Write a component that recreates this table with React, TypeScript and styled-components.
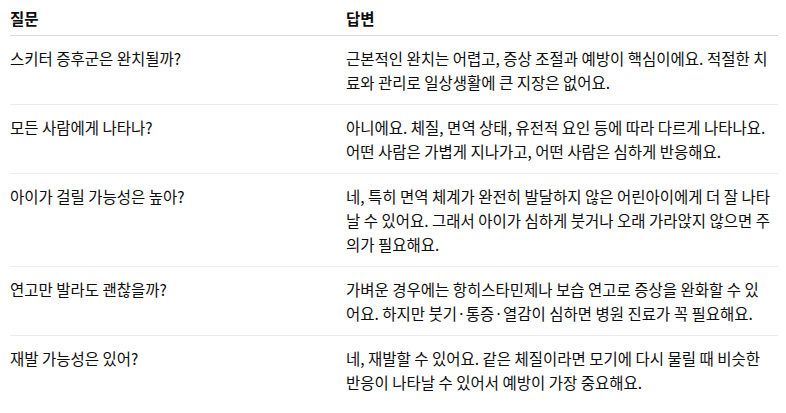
import React from "react";
import styled, { createGlobalStyle } from "styled-components";

const Global = createGlobalStyle`
  html, body { margin: 0; padding: 0; background: #ffffff; }
  body {
    font-family: "Noto Sans CJK KR", "Noto Sans", sans-serif;
    color: #0d0d0d;
  }
`;

const Wrap = styled.div`
  padding: 0 8px 0 10px;
`;

const Table = styled.table`
  width: 768px;
  border-collapse: collapse;
  table-layout: fixed;
  font-size: 15.5px;
  line-height: 24px;
`;

const Col = styled.col<{ $w: number }>`
  width: ${(p) => p.$w}px;
`;

const HeadCell = styled.th`
  text-align: left;
  font-weight: 700;
  padding: 6px 6.4px 5px 0;
  border-bottom: 1px solid #d9d9d9;
  vertical-align: top;
`;

const Row = styled.tr<{ $last?: boolean }>`
  border-bottom: ${(p) => (p.$last ? "none" : "1px solid #ececec")};
`;

const Cell = styled.td`
  padding: 10px 6.4px 10px 0;
  vertical-align: top;
  font-weight: 400;
`;

const rows: [string, string][] = [
  [
    "스키터 증후군은 완치될까?",
    "근본적인 완치는 어렵고, 증상 조절과 예방이 핵심이에요. 적절한 치료와 관리로 일상생활에 큰 지장은 없어요.",
  ],
  [
    "모든 사람에게 나타나?",
    "아니에요. 체질, 면역 상태, 유전적 요인 등에 따라 다르게 나타나요. 어떤 사람은 가볍게 지나가고, 어떤 사람은 심하게 반응해요.",
  ],
  [
    "아이가 걸릴 가능성은 높아?",
    "네, 특히 면역 체계가 완전히 발달하지 않은 어린아이에게 더 잘 나타날 수 있어요. 그래서 아이가 심하게 붓거나 오래 가라앉지 않으면 주의가 필요해요.",
  ],
  [
    "연고만 발라도 괜찮을까?",
    "가벼운 경우에는 항히스타민제나 보습 연고로 증상을 완화할 수 있어요. 하지만 붓기·통증·열감이 심하면 병원 진료가 꼭 필요해요.",
  ],
  [
    "재발 가능성은 있어?",
    "네, 재발할 수 있어요. 같은 체질이라면 모기에 다시 물릴 때 비슷한 반응이 나타날 수 있어서 예방이 가장 중요해요.",
  ],
];

export default function App() {
  return (
    <Wrap>
      <Global />
      <Table>
        <colgroup>
          <Col $w={336} />
          <Col $w={432} />
        </colgroup>
        <thead>
          <tr>
            <HeadCell>질문</HeadCell>
            <HeadCell>답변</HeadCell>
          </tr>
        </thead>
        <tbody>
          {rows.map(([q, a], i) => (
            <Row key={i} $last={i === rows.length - 1}>
              <Cell>{q}</Cell>
              <Cell>{a}</Cell>
            </Row>
          ))}
        </tbody>
      </Table>
    </Wrap>
  );
}
